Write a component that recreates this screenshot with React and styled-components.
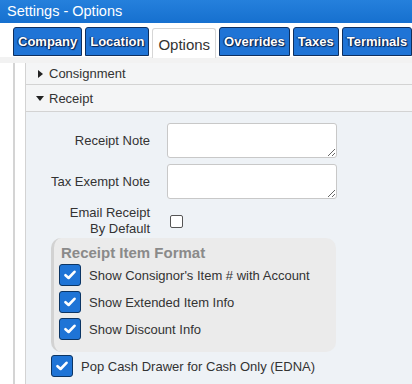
import React from 'react';
import styled, { createGlobalStyle } from 'styled-components';

const GlobalStyle = createGlobalStyle`
  body {
    margin: 0;
    background: #fff;
    font-family: "Liberation Sans", Arial, sans-serif;
    color: #333;
    overflow: hidden;
  }
`;

const Page = styled.div`
  width: 412px;
  height: 384px;
  overflow: hidden;
`;

const TitleBar = styled.div`
  height: 23px;
  background: linear-gradient(#2580dc, #1670cf);
  color: #fff;
  font-size: 14.5px;
  line-height: 23px;
  padding-left: 7px;
  white-space: nowrap;
`;

const TabRow = styled.div`
  display: flex;
  gap: 3px;
  padding: 4px 0 0 13px;
  height: 30px;
  white-space: nowrap;
  background: #fff;
`;

const Tab = styled.div`
  box-sizing: border-box;
  height: ${(p) => (p.$active ? '30px' : '29px')};
  margin-top: ${(p) => (p.$active ? '1px' : '0')};
  padding: 0 ${(p) => (p.$active ? '5px' : '4px')};
  border: 1px solid ${(p) => (p.$active ? '#d6d6d6' : '#0e2f5e')};
  border-bottom: ${(p) => (p.$active ? 'none' : '1px solid #0e2f5e')};
  border-radius: 3px 3px 0 0;
  background: ${(p) => (p.$active ? '#fff' : '#1f74d6')};
  color: ${(p) => (p.$active ? '#333' : '#fff')};
  font-size: ${(p) => (p.$active ? '15px' : '13px')};
  font-weight: ${(p) => (p.$active ? 'normal' : 'bold')};
  line-height: ${(p) => (p.$active ? '31px' : '28px')};
  text-shadow: ${(p) =>
    p.$active ? 'none' : '0 0 1px #0a2450, 1px 1px 1px #0a2450, -1px 0 1px #0a2450'};
  flex-shrink: 0;
`;

const Band = styled.div`
  height: 6px;
  background: #f2f2f2;
`;

const Body = styled.div`
  padding-left: 13px;
`;

const Rail = styled.div`
  border-left: 2px solid #d4d4d4;
  padding-left: 10px;
  height: 330px;
`;

const AccHeader = styled.div`
  display: flex;
  align-items: center;
  gap: 5px;
  height: ${(p) => p.$h}px;
  padding-left: 10px;
  background: #f4f5f6;
  border: 1px solid #d3d3d3;
  border-top: none;
  border-right: none;
  font-size: 13px;
  color: #333;
`;

const Caret = styled.span`
  width: 0;
  height: 0;
  border-style: solid;
  ${(p) =>
    p.$open
      ? 'border-width: 5px 4px 0 4px; border-color: #222 transparent transparent transparent;'
      : 'border-width: 4px 0 4px 5px; border-color: transparent transparent transparent #222; margin-left: 2px; margin-right: 1px;'}
`;

const Panel = styled.div`
  background: #eef2f6;
  border-left: 1px solid #d3d3d3;
  padding-top: 11px;
  height: 300px;
`;

const FormGrid = styled.div`
  display: grid;
  grid-template-columns: 124px 170px;
  column-gap: 17px;
  row-gap: 6px;
  align-items: center;
`;

const Label = styled.label`
  text-align: right;
  font-size: 13px;
  line-height: 16px;
  color: #333;
`;

const Note = styled.textarea`
  box-sizing: border-box;
  width: 170px;
  height: 35px;
  border: 1px solid #c8c8c8;
  border-radius: 3px;
  background: #fff;
  margin: 0;
  display: block;
`;

const PlainBox = styled.span`
  display: block;
  width: 11px;
  height: 11px;
  border: 1px solid #555;
  border-radius: 2px;
  background: #fff;
  margin-left: 3px;
`;

const Group = styled.div`
  box-sizing: border-box;
  width: 285px;
  margin: 1px 0 0 25px;
  padding: 6px 0 12px 5px;
  background: #ebebeb;
  border-left: 3px solid #d2d2d2;
  border-radius: 10px;
`;

const GroupTitle = styled.div`
  font-size: 15px;
  font-weight: bold;
  color: #8a8a8a;
  padding-left: 2px;
  line-height: 17px;
  margin-bottom: 3px;
`;

const CheckRow = styled.div`
  display: flex;
  align-items: center;
  gap: 8px;
  margin-top: ${(p) => p.$top || 0}px;
  margin-left: ${(p) => p.$left || 0}px;
  font-size: 13px;
  color: #333;
  white-space: nowrap;
`;

const BlueBox = styled.span`
  box-sizing: border-box;
  width: 22px;
  height: 22px;
  border: 1px solid #0c3564;
  border-radius: 3px;
  background: #1f74d6;
  display: flex;
  align-items: center;
  justify-content: center;
`;

function Check({ label, top, left }) {
  return (
    <CheckRow $top={top} $left={left}>
      <BlueBox>
        <svg width="12" height="10" viewBox="0 0 12 10">
          <path d="M1.5 5.2 L4.6 8 L10.5 1.8" fill="none" stroke="#fff" strokeWidth="2.6" strokeLinecap="round" strokeLinejoin="round" />
        </svg>
      </BlueBox>
      {label}
    </CheckRow>
  );
}

const tabs = ['Company', 'Location', 'Options', 'Overrides', 'Taxes', 'Terminals'];

export default function App() {
  return (
    <Page>
      <GlobalStyle />
      <TitleBar>Settings - Options</TitleBar>
      <TabRow>
        {tabs.map((t) => (
          <Tab key={t} $active={t === 'Options'}>
            {t}
          </Tab>
        ))}
      </TabRow>
      <Band />
      <Body>
        <Rail>
          <AccHeader $h={21}>
            <Caret />
            Consignment
          </AccHeader>
          <AccHeader $h={26}>
            <Caret $open />
            Receipt
          </AccHeader>
          <Panel>
            <FormGrid>
              <Label>Receipt Note</Label>
              <Note />
              <Label>Tax Exempt Note</Label>
              <Note />
              <Label>
                Email Receipt
                <br />
                By Default
              </Label>
              <PlainBox />
            </FormGrid>
            <Group>
              <GroupTitle>Receipt Item Format</GroupTitle>
              <Check label="Show Consignor's Item # with Account" />
              <Check label="Show Extended Item Info" top={5} />
              <Check label="Show Discount Info" top={5} />
            </Group>
            <Check label="Pop Cash Drawer for Cash Only (EDNA)" top={3} left={25} />
          </Panel>
        </Rail>
      </Body>
    </Page>
  );
}
